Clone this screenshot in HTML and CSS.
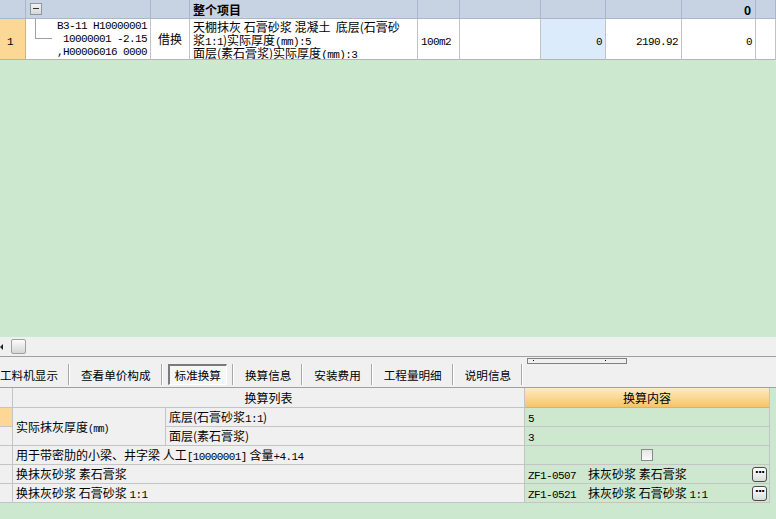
FILE: index.html
```html
<!DOCTYPE html>
<html lang="zh">
<head>
<meta charset="utf-8">
<link rel="stylesheet" href="styles.css">
</head>
<body>
<div class="page">
  <div class="top">
    <div class="c h"></div>
    <div class="c h"><span class="minus"></span></div>
    <div class="c h"></div>
    <div class="c h bold">整个项目</div>
    <div class="c h"></div>
    <div class="c h"></div>
    <div class="c h"></div>
    <div class="c h"></div>
    <div class="c h num bold">0</div>
    <div class="c h"></div>

    <div class="c rh"><span class="a">1</span></div>
    <div class="c code"><span class="tree"></span><span class="codetext a">B3-11 H10000001<br>10000001 -2.15<br>,H00006016 0000</span></div>
    <div class="c center">借换</div>
    <div class="c name">天棚抹灰 石膏砂浆 混凝土&nbsp; 底层(石膏砂<br>浆<span class="a">1:1</span>)实际厚度<span class="a">(mm):5</span><br>面层(素石膏浆)实际厚度<span class="a">(mm):3</span></div>
    <div class="c mid"><span class="a">100m2</span></div>
    <div class="c"></div>
    <div class="c num blue"><span class="a">0</span></div>
    <div class="c num"><span class="a">2190.92</span></div>
    <div class="c num"><span class="a">0</span></div>
    <div class="c"></div>
  </div>

  <div class="fill"></div>

  <div class="scroll">
    <span class="arrow"></span>
    <span class="thumb"></span>
  </div>

  <div class="tabs">
    <span class="tab first">工料机显示</span><span class="sep"></span>
    <span class="tab">查看单价构成</span><span class="sep"></span>
    <span class="tab active">标准换算</span><span class="sep"></span>
    <span class="tab">换算信息</span><span class="sep"></span>
    <span class="tab">安装费用</span><span class="sep"></span>
    <span class="tab">工程量明细</span><span class="sep"></span>
    <span class="tab">说明信息</span><span class="sep"></span>
    <span class="splitter"><i></i><i></i></span>
  </div>

  <div class="grid">
    <div class="g gh"></div>
    <div class="g gh span2 ctr">换算列表</div>
    <div class="g ghead ctr">换算内容</div>
    <div class="gf"></div>

    <div class="g grh sel"></div>
    <div class="g gl rspan"><span>实际抹灰厚度<span class="a sm">(mm)</span></span></div>
    <div class="g gl">底层(石膏砂浆<span class="a">1:1</span>)</div>
    <div class="g gv"><span class="a">5</span></div>
    <div class="gf"></div>

    <div class="g grh"></div>
    <div class="g gl">面层(素石膏浆)</div>
    <div class="g gv"><span class="a">3</span></div>
    <div class="gf"></div>

    <div class="g grh"></div>
    <div class="g gl span2">用于带密肋的小梁、井字梁 人工<span class="a">[10000001]</span> 含量<span class="a">+4.14</span></div>
    <div class="g gv ctr"><span class="check"></span></div>
    <div class="gf"></div>

    <div class="g grh"></div>
    <div class="g gl span2">换抹灰砂浆 素石膏浆</div>
    <div class="g gv btnrow"><span><span class="a">ZF1-0507&nbsp; </span>抹灰砂浆 素石膏浆</span><span class="dots">···</span></div>
    <div class="gf"></div>

    <div class="g grh"></div>
    <div class="g gl span2">换抹灰砂浆 石膏砂浆 <span class="a">1:1</span></div>
    <div class="g gv btnrow"><span><span class="a">ZF1-0521&nbsp; </span>抹灰砂浆 石膏砂浆 <span class="a">1:1</span></span><span class="dots">···</span></div>
    <div class="gf"></div>
  </div>

  <div class="bottomfill"></div>
</div>
</body>
</html>
```

FILE: styles.css
```css
* { box-sizing: border-box; }
html, body { margin: 0; padding: 0; }
body {
  width: 776px;
  height: 519px;
  overflow: hidden;
  background: #cce8cf;
  font-family: "Noto Sans CJK SC", sans-serif;
  font-size: 12px;
  color: #000;
}
.a {
  font-family: "Liberation Mono", monospace;
  font-size: 11px;
  letter-spacing: -0.6px;
  line-height: 0;
}
.codetext.a { line-height: 13px; }
.a.sm { font-size: 10px; letter-spacing: -0.8px; }
.page {
  display: flex;
  flex-direction: column;
  height: 519px;
}

/* top grid */
.top {
  display: grid;
  grid-template-columns: 26px 125px 39px 228px 42px 81px 65px 76px 74px 20px;
  grid-template-rows: 19px 41px;
  background: #fff;
}
.c {
  border-right: 1px solid #c3c3c3;
  border-bottom: 1px solid #b4b4b4;
  line-height: 13px;
  overflow: hidden;
  white-space: nowrap;
}
.c.h {
  background: #c7d3e3;
  border-right-color: #aab7c8;
  border-bottom-color: #aab7c8;
  padding: 3px 3px 0;
}
.bold { font-weight: bold; }
.num {
  text-align: right;
  padding: 14px 3px 0 0;
}
.c.h.num { padding-top: 3px; padding-right: 4px; }
.minus {
  display: block;
  width: 12px;
  height: 12px;
  border: 1px solid #8e96a2;
  background: linear-gradient(#f2f2f2, #d8d8d8);
  position: relative;
  margin-left: 1px;
}
.minus::after {
  content: "";
  position: absolute;
  left: 2px;
  right: 2px;
  top: 4px;
  height: 1px;
  background: #333;
}
.rh {
  background: #fcd796;
  padding: 14px 0 0 7px;
  border-right-color: #c9b58a;
}
.code {
  display: flex;
  align-items: flex-start;
  padding: 1px 3px 0 9px;
}
.tree {
  width: 17px;
  height: 20px;
  margin-top: -1px;
  border-left: 1px solid #a0a0a0;
  border-bottom: 1px solid #a0a0a0;
  flex: none;
}
.codetext {
  flex: 1;
  text-align: right;
}
.center {
  text-align: center;
  padding-top: 13px;
}
.name { padding: 1px 0 0 3px; }
.mid { padding: 14px 0 0 3px; }
.blue { background: #dcebfb; }

.fill { flex: 1; background: #cce8cf; }

/* scroll bar */
.scroll {
  height: 20px;
  background: #f0f0f0;
  border-bottom: 1px solid #a0a0a0;
  display: flex;
  align-items: center;
  gap: 8px;
}
.arrow {
  width: 0;
  height: 0;
  border-top: 3px solid transparent;
  border-bottom: 3px solid transparent;
  border-right: 3px solid #222;
}
.thumb {
  width: 15px;
  height: 15px;
  border: 1px solid #a0a0a0;
  border-radius: 2px;
  background: linear-gradient(#fbfbfb, #d6d6d6);
}

/* tabs */
.tabs {
  height: 31px;
  background: #f0f0f0;
  border-bottom: 1px solid #a0a0a0;
  display: flex;
  align-items: center;
  font-size: 11.6px;
  padding-top: 5px;
}
.tab {
  padding: 0 10px 0 11px;
  line-height: 18px;
}
.tab.first { padding-left: 0; }
.tab.active {
  margin: 0 5px 0 5px;
  padding: 0 5px 0 5px;
  border-top: 2px solid #7a7a7a;
  border-left: 2px solid #7a7a7a;
  border-bottom: 1px solid #fff;
  border-right: 1px solid #fff;
  background: #f6f6f6;
}
.sep {
  width: 2px;
  height: 21px;
  border-left: 1px solid #a8a8a8;
  border-right: 1px solid #ffffff;
}
.splitter {
  align-self: flex-start;
  margin-top: -4px;
  margin-left: 4px;
  width: 100px;
  height: 6px;
  border: 1px solid #808080;
  display: flex;
  justify-content: space-between;
  padding: 1px 20px 0 5px;
}
.splitter i {
  display: block;
  width: 1px;
  height: 1px;
  background: #000;
}

/* bottom grid */
.grid {
  display: grid;
  grid-template-columns: 13px 153px 359px 245px 6px;
  grid-template-rows: 20px 19px 19px 19px 19px 19px;
  background: #f0f0f0;
  font-size: 12px;
}
.g {
  border-right: 1px solid #c4c4c4;
  border-bottom: 1px solid #c4c4c4;
  line-height: 18px;
  padding-left: 3px;
  white-space: nowrap;
  overflow: hidden;
}
.gf { background: #cce8cf; }
.gh { background: #f0f0f0; padding-top: 1px; }
.ghead {
  background: linear-gradient(#fdebc3, #f7c467);
  border-bottom-color: #d8b46a;
  padding-top: 1px;
}
.ctr { text-align: center; padding-left: 0; }
.span2 { grid-column: span 2; }
.rspan {
  grid-row: span 2;
  display: flex;
  align-items: center;
}
.grh { background: #f0f0f0; padding: 0; }
.grh.sel { background: #fcd796; }
.gl { background: #f0f0f0; }
.gv { background: #cde8cf; }
.check {
  display: inline-block;
  width: 12px;
  height: 12px;
  margin-top: 3px;
  border: 1px solid #8a8a8a;
  background: linear-gradient(#e6e6e6, #fafafa);
  vertical-align: top;
}
.btnrow {
  display: flex;
  justify-content: space-between;
  align-items: center;
  padding-right: 2px;
}
.dots {
  width: 15px;
  height: 15px;
  border: 1px solid #4a4a4a;
  border-radius: 3px;
  background: linear-gradient(#ffffff, #dcdcdc);
  font-size: 11px;
  font-weight: bold;
  line-height: 9px;
  text-align: center;
  letter-spacing: -1px;
  font-family: "DejaVu Sans", sans-serif;
}

.bottomfill { height: 16px; background: #cce8cf; }
```
